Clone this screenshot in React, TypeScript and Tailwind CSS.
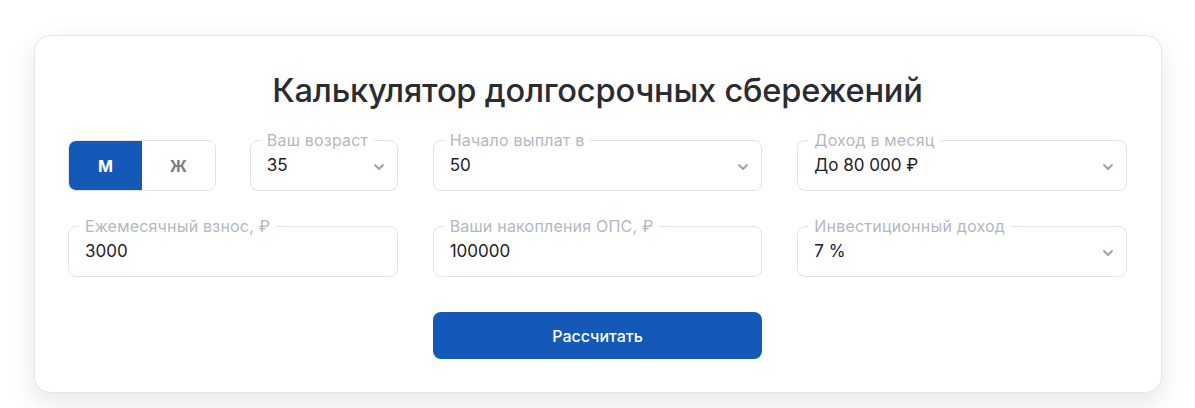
import { ChevronDown } from 'lucide-react';

const font = { fontFamily: 'Inter, "Noto Sans", sans-serif' };

function Field({ label, value, select }: { label: string; value: string; select?: boolean }) {
  return (
    <div className="relative flex h-[51px] items-center rounded-lg border border-[#e1e3e8] bg-white pl-4 pr-2.5">
      <span className="absolute -top-[11px] left-[10px] bg-white px-1.5 text-[16px] leading-[20px] tracking-[0.2px] text-[#b4b7c0]">
        {label}
      </span>
      <span className="flex-1 text-[17px] text-[#1f2126]">{value}</span>
      {select && <ChevronDown size={16} strokeWidth={2.75} className="mt-0.5 text-[#9aa0ab]" />}
    </div>
  );
}

export default function App() {
  return (
    <div className="min-h-[408px] bg-white pl-[34px] pr-[33px] pt-[35px]" style={font}>
      <div className="rounded-2xl border border-[#e3e5e9] bg-white pb-[33px] pl-[33px] pr-[34px] pt-[34px] shadow-[0_10px_28px_rgba(0,0,0,0.10)]">
        <h1 className="mb-[30px] text-center text-[32.6px] font-medium leading-[40px] tracking-[-0.2px] text-[#2a2c31]">
          Калькулятор долгосрочных сбережений
        </h1>
        <div className="grid grid-cols-3 gap-x-[35px] gap-y-[35px]">
          <div className="grid grid-cols-2 gap-[34px]">
            <div className="flex h-[51px] overflow-hidden rounded-lg border border-[#e1e3e8]">
              <button className="flex-1 bg-[#1559b8] text-[16px] font-bold text-white">М</button>
              <button className="flex-1 bg-white text-[16px] font-bold text-[#7b7f8b]">Ж</button>
            </div>
            <Field label="Ваш возраст" value="35" select />
          </div>
          <Field label="Начало выплат в" value="50" select />
          <Field label="Доход в месяц" value="До 80 000 ₽" select />
          <Field label="Ежемесячный взнос, ₽" value="3000" />
          <Field label="Ваши накопления ОПС, ₽" value="100000" />
          <Field label="Инвестиционный доход" value="7 %" select />
          <button className="col-start-2 h-[47px] rounded-lg bg-[#1559b8] text-[16px] font-medium text-white">
            Рассчитать
          </button>
        </div>
      </div>
    </div>
  );
}
